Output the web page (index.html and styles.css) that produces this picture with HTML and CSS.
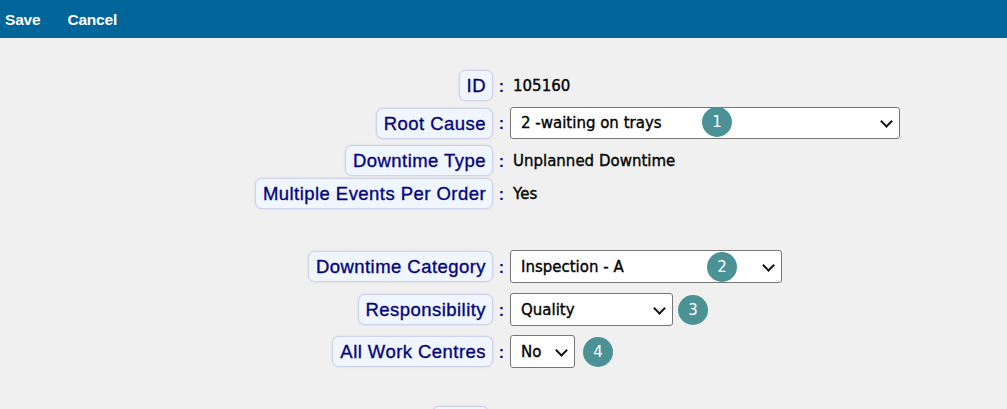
FILE: index.html
```html
<!DOCTYPE html>
<html>
<head>
<meta charset="utf-8">
<link rel="stylesheet" href="styles.css">
</head>
<body>
<div class="toolbar">
  <a class="tool" href="#">Save</a>
  <a class="tool" href="#">Cancel</a>
</div>
<div class="form">
  <div class="row r-id">
    <div class="lab"><span class="label">ID</span></div>
    <div class="colon">:</div>
    <div class="val"><span class="text">105160</span></div>
  </div>
  <div class="row r-rc">
    <div class="lab"><span class="label">Root Cause</span></div>
    <div class="colon">:</div>
    <div class="val">
      <span class="selwrap w-rc"><select class="sel"><option>2 -waiting on trays</option></select></span>
      <span class="badge b1">1</span>
    </div>
  </div>
  <div class="row r-dt">
    <div class="lab"><span class="label">Downtime Type</span></div>
    <div class="colon">:</div>
    <div class="val"><span class="text">Unplanned Downtime</span></div>
  </div>
  <div class="row r-me">
    <div class="lab"><span class="label">Multiple Events Per Order</span></div>
    <div class="colon">:</div>
    <div class="val"><span class="text">Yes</span></div>
  </div>
  <div class="row r-dc">
    <div class="lab"><span class="label">Downtime Category</span></div>
    <div class="colon">:</div>
    <div class="val">
      <span class="selwrap w-dc"><select class="sel"><option>Inspection - A</option></select></span>
      <span class="badge b2">2</span>
    </div>
  </div>
  <div class="row r-rs">
    <div class="lab"><span class="label">Responsibility</span></div>
    <div class="colon">:</div>
    <div class="val">
      <span class="selwrap w-rs"><select class="sel"><option>Quality</option></select></span>
      <span class="badge b3">3</span>
    </div>
  </div>
  <div class="row r-aw">
    <div class="lab"><span class="label">All Work Centres</span></div>
    <div class="colon">:</div>
    <div class="val">
      <span class="selwrap w-aw"><select class="sel"><option>No</option></select></span>
      <span class="badge b4">4</span>
    </div>
  </div>
  <div class="row r-bt">
    <div class="lab"><span class="label btn">&nbsp;</span></div>
  </div>
</div>
</body>
</html>
```
FILE: styles.css
```css
html, body {
  margin: 0;
  padding: 0;
  background: #f0f0f0;
  overflow: hidden;
}
body {
  height: 409px;
}
.toolbar {
  height: 38px;
  background: #00669a;
  display: flex;
  align-items: center;
  gap: 27px;
  padding-left: 5px;
}
.tool {
  color: #ffffff;
  font-family: "Liberation Sans", Arial, sans-serif;
  font-weight: bold;
  font-size: 15.5px;
  text-decoration: none;
  letter-spacing: -0.2px;
  padding-top: 2px;
}
.form {
  padding-top: 32px;
}
.row {
  display: grid;
  grid-template-columns: 493px 17px 1fr;
  align-items: center;
}
.r-id { height: 30px; }
.r-rc { height: 32px; margin-top: 7px; }
.r-dt { height: 31px; margin-top: 6px; }
.r-me { height: 31px; margin-top: 2px; }
.r-dc { height: 33px; margin-top: 41px; }
.r-rs { height: 33px; margin-top: 10px; }
.r-aw { height: 33px; margin-top: 9px; }
.r-bt { height: 30px; margin-top: 38px; }
.lab {
  text-align: right;
}
.label {
  display: inline-block;
  box-sizing: border-box;
  height: 31px;
  line-height: 29px;
  padding: 0 6px 0 7px;
  background: #eff6ff;
  border: 1px solid #cdd2ea;
  border-radius: 7px;
  box-shadow: 0 0 2px rgba(120, 120, 170, 0.25);
  color: #05057c;
  -webkit-text-stroke: 0.35px #05057c;
  font-family: "Liberation Sans", Arial, sans-serif;
  font-size: 18.5px;
  letter-spacing: 0.45px;
  white-space: nowrap;
}
.r-bt .lab { padding-right: 4px; }
.btn {
  width: 57px;
}
.colon {
  text-align: center;
  color: #0a0a80;
  font-family: "Liberation Sans", Arial, sans-serif;
  font-weight: bold;
  font-size: 16px;
  padding-top: 2px;
}
.val {
  position: relative;
  height: 100%;
  display: flex;
  align-items: center;
}
.text {
  padding-left: 3px;
  font-family: "DejaVu Sans", Verdana, sans-serif;
  font-size: 15px;
  color: #000;
  -webkit-text-stroke: 0.35px #000;
}
.selwrap {
  position: relative;
  display: block;
  height: 100%;
}
.selwrap::after {
  content: "";
  position: absolute;
  right: 9px;
  top: 50%;
  width: 7px;
  height: 7px;
  margin-top: -6px;
  border-right: 2px solid #111;
  border-bottom: 2px solid #111;
  transform: rotate(45deg);
  pointer-events: none;
}
.sel {
  -webkit-appearance: none;
  appearance: none;
  box-sizing: border-box;
  width: 100%;
  height: 100%;
  font-family: "DejaVu Sans", Verdana, sans-serif;
  font-size: 15px;
  color: #000;
  -webkit-text-stroke: 0.35px #000;
  background-color: #fff;
  border: 1px solid #767676;
  border-radius: 3px;
  padding: 0 24px 0 10px;
  margin: 0;
  outline: none;
}
.w-rc { width: 390px; }
.w-dc { width: 272px; }
.w-rs { width: 163px; }
.w-aw { width: 65px; }
.badge {
  position: absolute;
  width: 30px;
  height: 30px;
  border-radius: 50%;
  background: #4a9296;
  color: #fff;
  font-family: "DejaVu Sans", Verdana, sans-serif;
  font-size: 15px;
  line-height: 30px;
  text-align: center;
  top: 50%;
  margin-top: -15px;
}
.b1 { left: 192px; margin-top: -16px; }
.b2 { left: 197px; }
.b3 { left: 168px; }
.b4 { left: 73px; }
```
